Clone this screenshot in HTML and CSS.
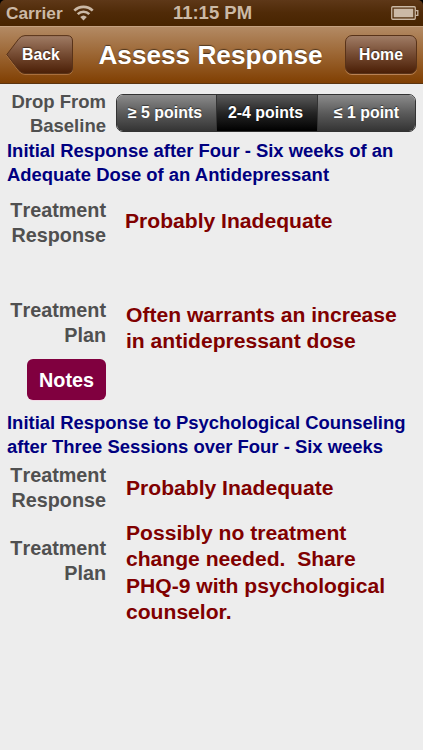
FILE: index.html
```html
<!DOCTYPE html>
<html lang="en">
<head>
    <meta charset="UTF-8">
    <meta name="viewport" content="width=device-width, initial-scale=1.0">
    <title>Assess Response</title>
    <link rel="stylesheet" href="styles.css">
</head>
<body>
  <div class="status_bar">
    <div class="carrier">
      <span>Carrier</span>
      <svg class="wifi" width="21" height="16" viewBox="0 0 21 16">
        <path d="M1.3 5.7a13 13 0 0 1 18.4 0M4.7 9.1a8.2 8.2 0 0 1 11.6 0" fill="none" stroke="#cbb9a6" stroke-width="2.6"/>
        <path d="M10.5 15.5L7.2 12a4.8 4.8 0 0 1 6.6 0z" fill="#cbb9a6"/>
      </svg>
    </div>
    <span class="time">11:15 PM</span>
    <svg class="battery" width="28" height="14" viewBox="0 0 28 14">
      <rect x=".75" y=".75" width="23.5" height="12.5" rx="1" fill="none" stroke="#cbb9a6" stroke-width="1.3"/>
      <rect x="2.7" y="2.7" width="19.6" height="8.6" fill="#cbb9a6"/>
      <path d="M24.5 4.7h2.3v4.6h-2.3" fill="none" stroke="#cbb9a6" stroke-width="1.3"/>
    </svg>
  </div>

  <header class="nav_bar">
    <a class="back">
      <svg class="back_bg" width="68" height="40" viewBox="0 0 68 40">
        <defs>
          <linearGradient id="brown" x1="0" y1="0" x2="0" y2="1">
            <stop offset="0" stop-color="#a07c65"/>
            <stop offset=".5" stop-color="#754b32"/>
            <stop offset="1" stop-color="#4b1f06"/>
          </linearGradient>
        </defs>
        <path d="M.8 20.5L13 4.5Q15.6 1.6 19 1.6H61Q66.5 1.6 66.5 7V34Q66.5 39.4 61 39.4H19Q15.6 39.4 13 36.5Z" fill="none" stroke="#b98153" stroke-opacity=".75"/>
        <path d="M.8 19.5L13 3.5Q15.6 .6 19 .6H61Q66.5 .6 66.5 6V33Q66.5 38.4 61 38.4H19Q15.6 38.4 13 35.5Z" fill="url(#brown)" stroke="#593319"/>
      </svg>
      <span class="back_text">Back</span>
    </a>
    <h1>Assess Response</h1>
    <a class="home">Home</a>
  </header>

  <main>
    <div class="row baseline">
      <div class="label">Drop From<br>Baseline</div>
      <div class="segments">
        <span class="seg">≥ 5 points</span>
        <span class="seg on">2-4 points</span>
        <span class="seg">≤ 1 point</span>
      </div>
    </div>

    <h2>Initial Response after Four - Six weeks of an<br>Adequate Dose of an Antidepressant</h2>
    <div class="row response01">
      <div class="label">Treatment<br>Response</div>
      <p class="value">Probably Inadequate</p>
    </div>
    <div class="row plan01">
      <div class="label">Treatment<br>Plan</div>
      <p class="value">Often warrants an increase<br>in antidepressant dose</p>
    </div>
    <a class="notes">Notes</a>

    <h2>Initial Response to Psychological Counseling<br>after Three Sessions over Four - Six weeks</h2>
    <div class="row response02">
      <div class="label">Treatment<br>Response</div>
      <p class="value">Probably Inadequate</p>
    </div>
    <div class="row plan02">
      <div class="label">Treatment<br>Plan</div>
      <p class="value">Possibly no treatment<br>change needed.&nbsp; Share<br>PHQ-9 with psychological<br>counselor.</p>
    </div>
  </main>
</body>
</html>
```
FILE: styles.css
```css
*{margin:0;padding:0;box-sizing:border-box;}
html{background:#000;}
body{width:423px;height:750px;overflow:hidden;background:linear-gradient(#000 6px,#ededed 6px);font-family:"Liberation Sans",Arial,sans-serif;font-weight:bold;}

/* status bar */
.status_bar{display:grid;grid-template-columns:1fr auto 1fr;align-items:center;height:26px;padding:0 4px 0 6px;background:linear-gradient(#5e3818,#4f2a07 50%,#482400);border-radius:5px 5px 0 0;color:#cbb9a6;font-size:17.3px;line-height:26px;}
.carrier{display:flex;align-items:center;gap:10px;}
.wifi{margin-top:-1px;}
.time{font-size:18.5px;}
.battery{justify-self:end;}

/* navigation bar */
.nav_bar{display:flex;align-items:center;justify-content:space-between;height:58px;padding:0 6px;background:linear-gradient(#b38a64,#9b6532 50%,#803f02);border-top:1px solid #c4a180;border-bottom:1px solid #5b3410;color:#fff;text-shadow:0 -1px 1px rgba(0,0,0,.5);}
h1{font-size:26.2px;line-height:30px;margin-left:2px;}
.back{position:relative;width:68px;height:40px;}
.back_bg{display:block;}
.back_text{position:absolute;left:16px;top:1px;font-size:15.8px;line-height:38px;}
.home{width:72px;height:39px;margin-bottom:1px;border:1px solid #593319;border-radius:7px;background:linear-gradient(#a07c65,#754b32 50%,#4b1f06);box-shadow:0 1px 0 #b98153;font-size:15.8px;line-height:37px;text-align:center;}

/* content */
.row{display:grid;grid-template-columns:106px 1fr;column-gap:20px;align-items:start;}
.label{font-size:19.8px;line-height:25.2px;color:#505050;text-align:right;font-kerning:none;}
.value{font-size:21.1px;line-height:26.4px;color:#800000;white-space:nowrap;}
h2{padding-left:7px;font-size:18.45px;line-height:24px;color:#000080;white-space:nowrap;}
.baseline{height:55px;padding-top:6px;column-gap:10px;}
.baseline .label{font-size:18.5px;line-height:24px;}
.segments{display:grid;grid-template-columns:99px 102px 1fr;width:300px;height:38px;margin-top:4px;border:1px solid #333;border-radius:7px;overflow:hidden;}
.seg{background:linear-gradient(#8b8b8b,#5b5b5b 50%,#343434);color:#fff;font-size:15.9px;line-height:36px;text-align:center;text-shadow:0 -1px 1px rgba(0,0,0,.5);}
.seg:first-child{padding-right:3px;}
.seg.on{padding-right:3px;background:linear-gradient(#5a5a5a,#252525 50%,#000);border-left:1px solid #333;border-right:1px solid #333;}
.response01{height:100px;padding-top:11px;}
.response01 .value{margin:10px 0 0 -1px;}
.plan01{height:72px;padding-top:11px;}
.plan01 .value{margin-top:4px;}
.notes{display:block;width:79px;height:41px;margin:0 0 11px 27px;border-radius:6px;background:#80003f;box-shadow:0 1px 0 -0.5px #f7c6de;color:#fff;font-size:19.8px;line-height:42px;text-align:center;}
.response02{height:61px;padding-top:4px;}
.response02 .value{margin-top:12px;}
.plan02 .label{margin-top:16px;}
```
